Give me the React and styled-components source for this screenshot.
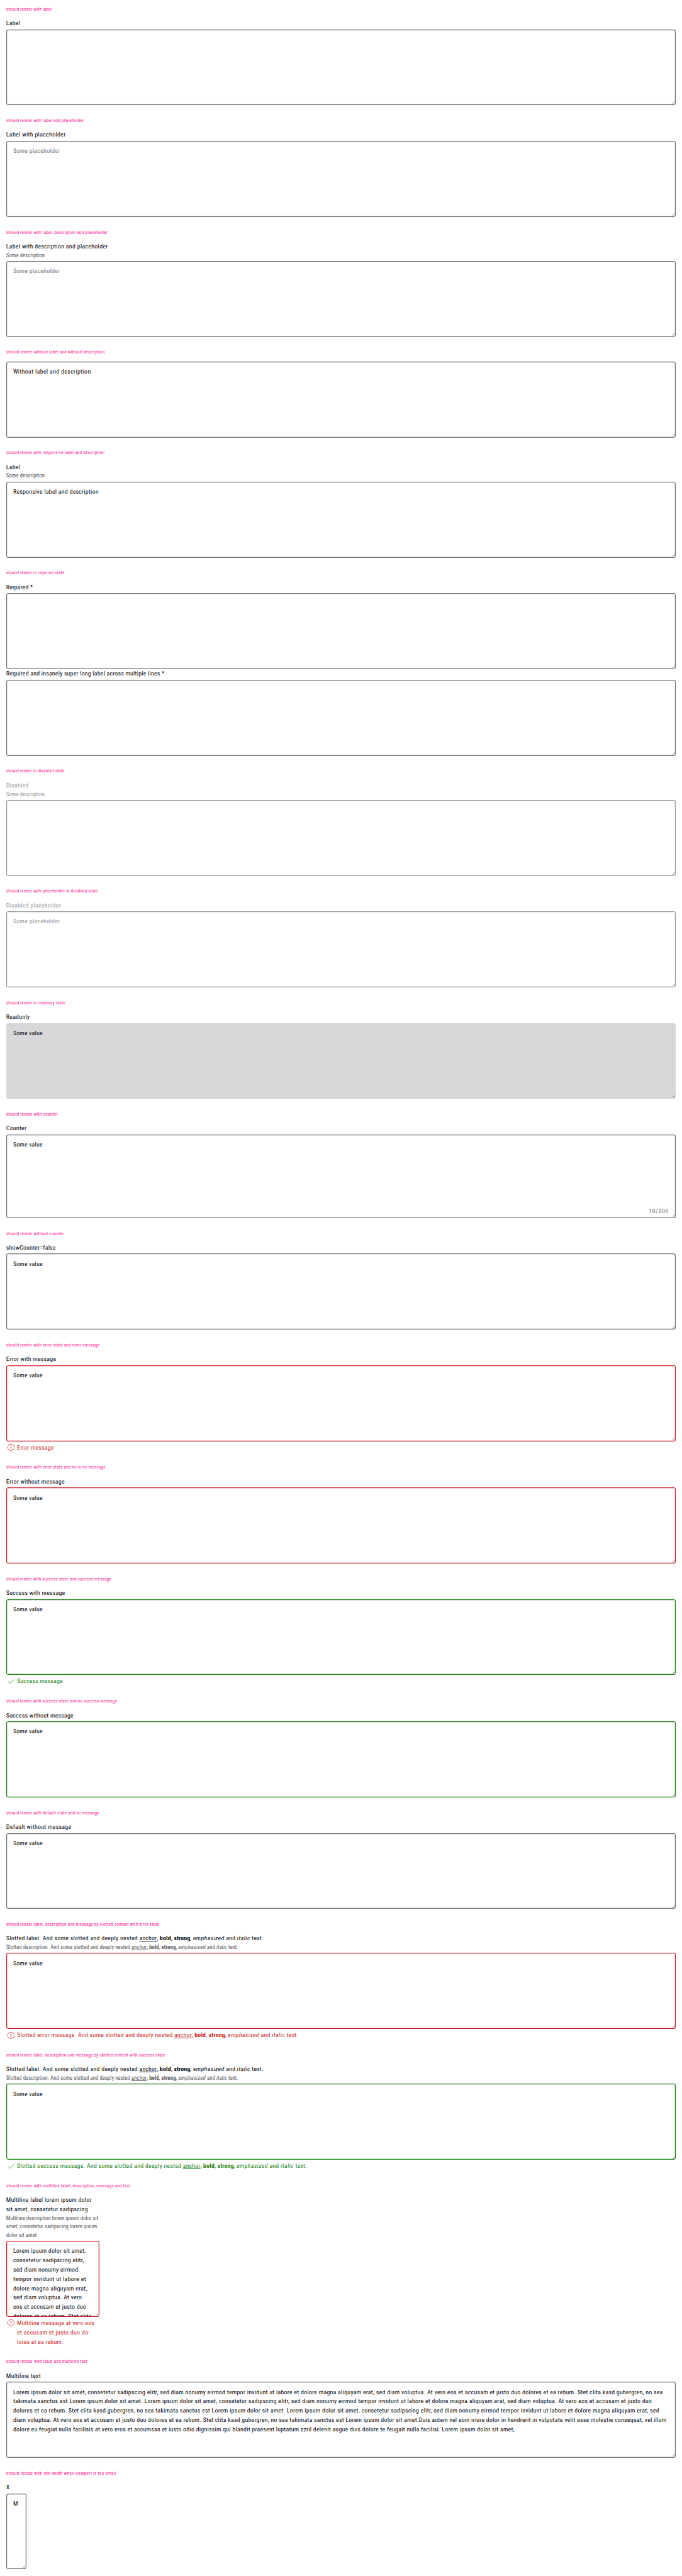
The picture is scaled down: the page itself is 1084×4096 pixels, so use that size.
import React from "react";
import styled, { createGlobalStyle, css } from "styled-components";

const SCALE = 4096 / 6651;
const u = (n) => `${(n * SCALE).toFixed(3)}px`;

const tones = {
  default: { border: "#6b6d70", label: "#010205", hint: "#535457", value: "#010205" },
  disabled: { border: "#949598", label: "#949598", hint: "#949598", value: "#949598" },
  readonly: { border: "#d8d8db", label: "#010205", hint: "#535457", value: "#010205" },
  error: { border: "#cc1922", label: "#010205", hint: "#535457", value: "#010205" },
  success: { border: "#197e10", label: "#010205", hint: "#535457", value: "#010205" },
};

const GlobalStyle = createGlobalStyle`
  *, *::before, *::after { box-sizing: border-box; }
  html, body { margin: 0; background: #fff; }
  body {
    font-family: Roboto, "Liberation Sans", sans-serif;
    font-stretch: 84%;
    color: #010205;
    overflow: hidden;
  }
`;

const Page = styled.main`
  display: flex;
  flex-direction: column;
  width: 100%;
  height: 4096px;
  overflow: hidden;
`;

const Story = styled.section`
  display: flex;
  flex-direction: column;
  flex: none;
  padding: ${u(16)};
`;

const Caption = styled.h2`
  margin: 0 0 ${u(16)};
  font-size: ${u(12)};
  line-height: ${u(16)};
  font-weight: 400;
  color: #ff1493;
`;

const Field = styled.div`
  display: flex;
  flex-direction: column;
  width: ${(p) => (p.$width ? u(p.$width) : "100%")};
`;

const Header = styled.div`
  display: flex;
  flex-direction: column;
  margin-bottom: ${u(4)};
  white-space: pre;
`;

const Label = styled.label`
  font-size: ${u(16)};
  line-height: ${u(24)};
  color: ${(p) => tones[p.$tone].label};
`;

const Description = styled.span`
  font-size: ${u(14)};
  line-height: ${u(21.86)};
  color: ${(p) => tones[p.$tone].hint};
`;

const Box = styled.div`
  position: relative;
  height: ${(p) => u(p.$height)};
  padding: calc(${u(14)} - 1px) calc(${u(18)} - 1px) 0;
  border: 1px solid ${(p) => tones[p.$tone].border};
  border-radius: ${u(4)};
  box-shadow: inset 0 0 0 0.23px ${(p) => tones[p.$tone].border};
  background: ${(p) => (p.$tone === "readonly" ? "#d8d8db" : "#fff")};
  color: ${(p) => (p.$placeholder && p.$tone !== "disabled" ? "#757575" : tones[p.$tone].value)};
  font-size: ${u(16)};
  line-height: ${u(24)};
  white-space: pre;
  overflow: hidden;
`;

const Counter = styled.span`
  position: absolute;
  right: calc(${u(18)} - 1px);
  bottom: calc(${u(5)} - 1px);
  color: #6b6d70;
`;

const Grip = styled.svg`
  position: absolute;
  right: calc(${u(2.7)} - 1px);
  bottom: calc(${u(2.5)} - 1px);
  width: ${u(7.6)};
  height: ${u(7.6)};
`;

const Message = styled.div`
  display: flex;
  gap: ${u(4)};
  margin-top: ${u(4)};
  font-size: ${u(16)};
  line-height: ${u(24)};
  white-space: pre;
  color: ${(p) => tones[p.$tone].border};
`;

const MessageIcon = styled.svg`
  flex: none;
  width: ${u(24)};
  height: ${u(24)};
`;

const Lines = styled.div`
  display: flex;
  flex-direction: column;
  padding-top: ${u(1)};
  margin-bottom: -${u(1)};
`;

const Run = styled.span`
  letter-spacing: ${(p) => (p.$track || 0) / 10000}em;
  ${(p) => p.$kind === "link" && css`text-decoration: underline;`}
  ${(p) => p.$kind === "bold" && css`font-weight: 700;`}
  ${(p) => p.$kind === "italic" && css`font-style: italic;`}
`;

const Line = styled.div``;

/* Each line is a list of runs: [text, tracking, kind]. */
function TextLines({ lines }) {
  return (
    <Lines>
      {lines.map((runs, i) => (
        <Line key={i}>
          {runs.map(([text, track, kind], j) => (
            <Run key={j} $track={track} $kind={kind}>{text}</Run>
          ))}
        </Line>
      ))}
    </Lines>
  );
}

function StateIcon({ tone }) {
  if (tone === "success") {
    return (
      <MessageIcon viewBox="0 0 24 24" fill="none" stroke="currentColor" strokeWidth="1.3">
        <path d="M4.8 12.6 9.8 17.4 20.2 7.2" />
      </MessageIcon>
    );
  }
  return (
    <MessageIcon viewBox="0 0 24 24" fill="none" stroke="currentColor">
      <circle cx="12" cy="12" r="8.4" strokeWidth="1.2" />
      <path d="M12 7.5v6M12 14.8v1.8" strokeWidth="1.8" />
    </MessageIcon>
  );
}

function Textarea({ tone = "default", label, description, value, placeholder, counter, message, width, height = 196 }) {
  return (
    <Field $width={width}>
      {label && (
        <Header>
          <Label $tone={tone}><TextLines lines={label} /></Label>
          {description && <Description $tone={tone}><TextLines lines={description} /></Description>}
        </Header>
      )}
      <Box $tone={tone} $height={height} $placeholder={Boolean(placeholder)}>
        {(value || placeholder) && <TextLines lines={value || placeholder} />}
        {counter && <Counter><Run $track={657}>{counter}</Run></Counter>}
        <Grip viewBox="0 0 7.6 7.6" fill="none" stroke="#4a4a4a" strokeWidth="0.9">
          <path d="M0.2 7.4 7.4 0.2M4 7.4 7.4 4" />
        </Grip>
      </Box>
      {message && (
        <Message $tone={tone}>
          <StateIcon tone={tone} />
          <TextLines lines={message} />
        </Message>
      )}
    </Field>
  );
}

const one = (text, track) => [[[text, track]]];
const someValue = one("Some value", 201);
const somePlaceholder = one("Some placeholder", 289);
const someDescription = one("Some description", 130);

const slotted = (intro, track) => [[
  [intro, track], ["anchor", 166, "link"], [", ", 200], ["bold", 198, "bold"], [", ", 200],
  ["strong", 120, "bold"], [", ", 200], ["emphasized", 432, "italic"], [" and ", 250],
  ["italic", 431, "italic"], [" text.", 252],
]];
const slottedLabel = slotted("Slotted label. And some slotted and deeply nested ", 303);
const slottedDescription = [[
  ["Slotted description. And some slotted and deeply nested ", 106], ["anchor", 243, "link"], [", ", 50],
  ["bold", 155, "bold"], [", ", 50], ["strong", 238, "bold"], [", ", 50], ["emphasized", 425, "italic"],
  [" and ", 80], ["italic", 222, "italic"], [" text.", 6],
]];

const stories = [
  { title: ["should render with label", 196], fields: [{ label: one("Label", 212) }] },
  { title: ["should render with label and placeholder", 202], fields: [{ label: one("Label with placeholder", 334), placeholder: somePlaceholder }] },
  { title: ["should render with label, description and placeholder", 199], fields: [{ label: one("Label with description and placeholder", 319), description: someDescription, placeholder: somePlaceholder }] },
  { title: ["should render without label and without description", 208], fields: [{ value: one("Without label and description", 356) }] },
  { title: ["should render with responsive label and description", 186], fields: [{ label: one("Label", 212), description: someDescription, value: one("Responsive label and description", 258) }] },
  { title: ["should render in required state", 169], fields: [{ label: one("Required *", 183) }, { label: one("Required and insanely super long label across multiple lines *", 220) }] },
  { title: ["should render in disabled state", 134], fields: [{ tone: "disabled", label: one("Disabled", 217), description: someDescription }] },
  { title: ["should render with placeholder in disabled state", 185], fields: [{ tone: "disabled", label: one("Disabled placeholder", 291), placeholder: somePlaceholder }] },
  { title: ["should render in readonly state", 188], fields: [{ tone: "readonly", label: one("Readonly", 237), value: someValue }] },
  { title: ["should render with counter", 217], fields: [{ label: one("Counter", 254), value: someValue, counter: "10/200", height: 216 }] },
  { title: ["should render without counter", 213], fields: [{ label: one("showCounter=false", 224), value: someValue }] },
  { title: ["should render with error state and error message", 196], fields: [{ tone: "error", label: one("Error with message", 264), value: someValue, message: one("Error message", 181) }] },
  { title: ["should render with error state and no error message", 192], fields: [{ tone: "error", label: one("Error without message", 271), value: someValue }] },
  { title: ["should render with success state and success message", 137], fields: [{ tone: "success", label: one("Success with message", 254), value: someValue, message: one("Success message", 181) }] },
  { title: ["should render with success state and no success message", 136], fields: [{ tone: "success", label: one("Success without message", 263), value: someValue }] },
  { title: ["should render with default state and no message", 182], fields: [{ label: one("Default without message", 301), value: someValue }] },
  {
    title: ["should render label, description and message by slotted content with error state", 195],
    fields: [{ tone: "error", label: slottedLabel, description: slottedDescription, value: someValue, message: slotted("Slotted error message. And some slotted and deeply nested ", 278) }],
  },
  {
    title: ["should render label, description and message by slotted content with success state", 182],
    fields: [{ tone: "success", label: slottedLabel, description: slottedDescription, value: someValue, message: slotted("Slotted success message. And some slotted and deeply nested ", 275) }],
  },
  {
    title: ["should render with multiline label, description, message and text", 229],
    fields: [{
      tone: "error",
      width: 240,
      label: [[["Multiline label lorem ipsum dolor", 268]], [["sit amet, consetetur sadipscing", 269]]],
      description: [
        [["Multiline description lorem ipsum dolor sit", 81]],
        [["amet, consetetur sadipscing lorem ipsum", 131]],
        [["dolor sit amet", 128]],
      ],
      value: [
        [["Lorem ipsum dolor sit amet,", 261]],
        [["consetetur sadipscing elitr,", 294]],
        [["sed diam nonumy eirmod", 257]],
        [["tempor invidunt ut labore et", 326]],
        [["dolore magna aliquyam erat,", 299]],
        [["sed diam voluptua. At vero", 235]],
        [["eos et accusam et justo duo", 252]],
        [["dolores et ea rebum. Stet clita", 266]],
      ],
      message: [
        [["Multiline message at vero eos", 243]],
        [["et accusam et justo duo do-", 319]],
        [["lores et ea rebum.", 210]],
      ],
    }],
  },
  {
    title: ["should render with label and multiline text", 248],
    fields: [{
      label: one("Multiline text", 331),
      value: [
        [["Lorem ipsum dolor sit amet, consetetur sadipscing elitr, sed diam nonumy eirmod tempor invidunt ut labore et dolore magna aliquyam erat, sed diam voluptua. At vero eos et accusam et justo duo dolores et ea rebum. Stet clita kasd gubergren, no sea", 278]],
        [["takimata sanctus est Lorem ipsum dolor sit amet. Lorem ipsum dolor sit amet, consetetur sadipscing elitr, sed diam nonumy eirmod tempor invidunt ut labore et dolore magna aliquyam erat, sed diam voluptua. At vero eos et accusam et justo duo", 278]],
        [["dolores et ea rebum. Stet clita kasd gubergren, no sea takimata sanctus est Lorem ipsum dolor sit amet. Lorem ipsum dolor sit amet, consetetur sadipscing elitr, sed diam nonumy eirmod tempor invidunt ut labore et dolore magna aliquyam erat, sed", 281]],
        [["diam voluptua. At vero eos et accusam et justo duo dolores et ea rebum. Stet clita kasd gubergren, no sea takimata sanctus est Lorem ipsum dolor sit amet.Duis autem vel eum iriure dolor in hendrerit in vulputate velit esse molestie consequat, vel illum", 263]],
        [["dolore eu feugiat nulla facilisis at vero eros et accumsan et iusto odio dignissim qui blandit praesent luptatum zzril delenit augue duis dolore te feugait nulla facilisi. Lorem ipsum dolor sit amet,", 260]],
      ],
    }],
  },
  { title: ["should render with min-width when viewport is too small", 277], fields: [{ width: 52, label: one("X", 0), value: one("M", 0) }] },
];

export default function App() {
  return (
    <>
      <GlobalStyle />
      <Page>
        {stories.map(({ title, fields }) => (
          <Story key={title[0]}>
            <Caption><Run $track={title[1]}>{title[0]}</Run></Caption>
            {fields.map((field, i) => <Textarea key={i} {...field} />)}
          </Story>
        ))}
      </Page>
    </>
  );
}
